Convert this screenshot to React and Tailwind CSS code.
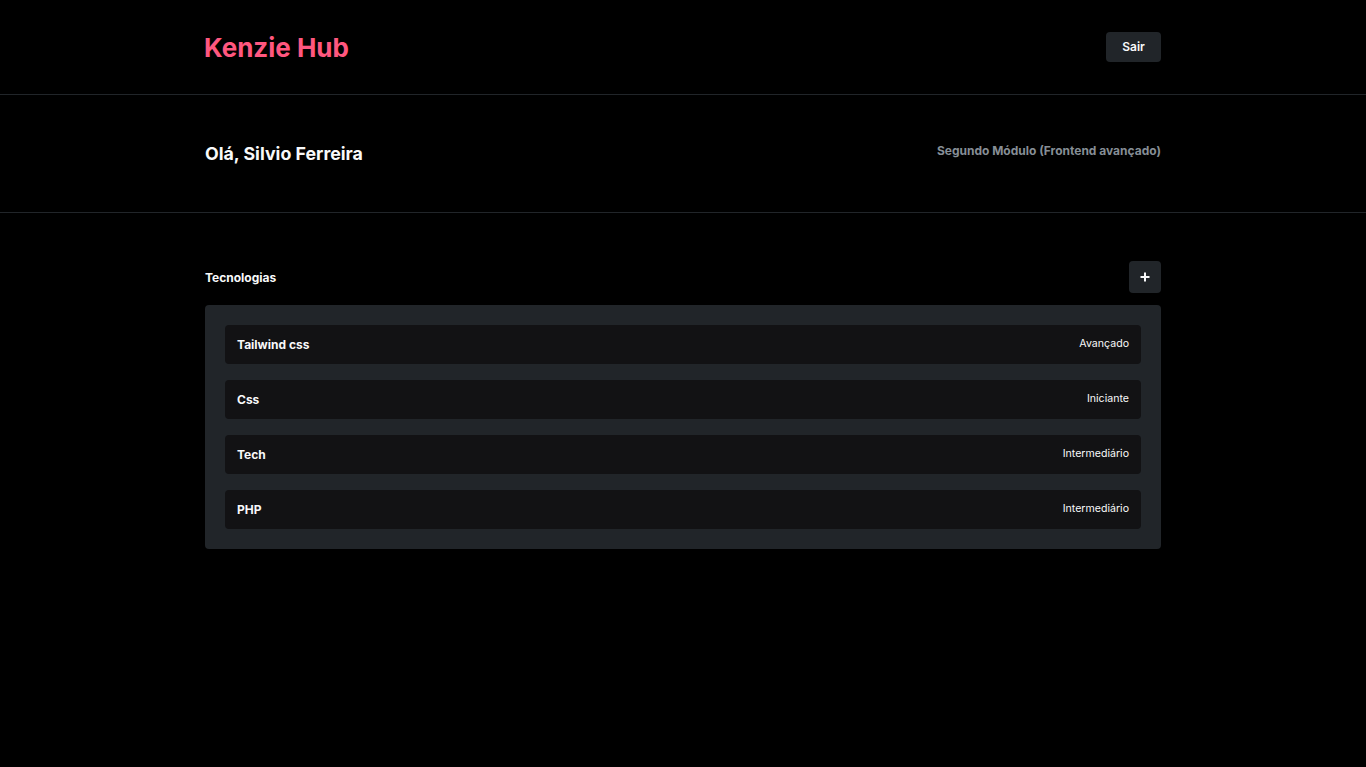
import React from "react";

const techs = [
  { name: "Tailwind css", level: "Avançado" },
  { name: "Css", level: "Iniciante" },
  { name: "Tech", level: "Intermediário" },
  { name: "PHP", level: "Intermediário" },
];

export default function App() {
  return (
    <div className="min-h-screen bg-black text-[#f8f9fa] font-['Inter',sans-serif]">
      {/* header */}
      <header className="h-[95px] border-b border-[#212529]">
        <div className="w-[956px] mx-auto h-full flex items-center justify-between">
          <h1 className="text-[26px] leading-[36px] font-bold text-[#ff577f] -ml-[1px] mt-[2px]">Kenzie Hub</h1>
          <button className="w-[55px] h-[30px] rounded-[4px] bg-[#212529] text-xs font-semibold">
            Sair
          </button>
        </div>
      </header>

      {/* user info */}
      <section className="h-[118px] border-b border-[#212529]">
        <div className="w-[956px] mx-auto h-full flex items-center justify-between">
          <h2 className="text-[17.8px] font-bold mt-[1px]">Olá, Silvio Ferreira</h2>
          <span className="text-xs font-bold text-[#868e96] -mt-[6px]">
            Segundo Módulo (Frontend avançado)
          </span>
        </div>
      </section>

      {/* techs */}
      <main className="w-[956px] mx-auto pt-12">
        <div className="flex items-center justify-between">
          <h3 className="text-xs font-bold mt-[2px]">Tecnologias</h3>
          <button className="w-8 h-8 rounded-[4px] bg-[#212529] flex items-center justify-center">
            <svg width="10" height="10" viewBox="0 0 10 10">
              <path d="M5 0.5v9M0.5 5h9" stroke="#f8f9fa" strokeWidth="2" />
            </svg>
          </button>
        </div>
        <ul className="mt-3 bg-[#212529] rounded-[4px] p-5 flex flex-col gap-4">
          {techs.map((t) => (
            <li
              key={t.name}
              className="h-[39px] rounded-[4px] bg-[#121214] px-3 flex items-center justify-between"
            >
              <span className="text-xs font-bold mt-[1px]">{t.name}</span>
              <span className="text-[10.6px] -mt-[1px]">{t.level}</span>
            </li>
          ))}
        </ul>
      </main>
    </div>
  );
}
